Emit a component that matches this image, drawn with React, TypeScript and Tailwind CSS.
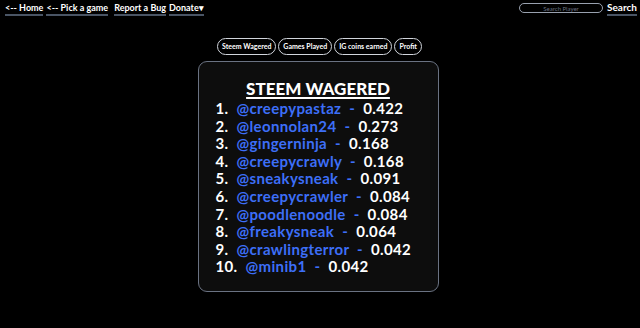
import React from "react";

const leaders = [
  { name: "creepypastaz", value: "0.422" },
  { name: "leonnolan24", value: "0.273" },
  { name: "gingerninja", value: "0.168" },
  { name: "creepycrawly", value: "0.168" },
  { name: "sneakysneak", value: "0.091" },
  { name: "creepycrawler", value: "0.084" },
  { name: "poodlenoodle", value: "0.084" },
  { name: "freakysneak", value: "0.064" },
  { name: "crawlingterror", value: "0.042" },
  { name: "minib1", value: "0.042" },
];

const tabs = ["Steem Wagered", "Games Played", "IG coins earned", "Profit"];

const App = () => {
  return (
    <div className="w-[640px] h-[328px] bg-black text-white font-['Lato','Noto_Sans',sans-serif] overflow-hidden">
      {/* nav bar */}
      <div className="flex items-start justify-between px-[5px] pt-[1px]">
        <div className="flex gap-[3px] text-[9px] font-bold leading-[13px]">
          <a className="border-b-2 border-gray-600">&lt;-- Home</a>
          <a className="border-b-2 border-gray-600">&lt;-- Pick a game</a>
          <a className="ml-[3px] border-b-2 border-gray-600">Report a Bug</a>
          <a className="border-b-2 border-gray-600">Donate▾</a>
        </div>
        <div className="flex items-start gap-[4px] mr-[-2px]">
          <input
            placeholder="Search Player"
            className="mt-[2px] w-[84px] h-[10px] rounded-full border border-gray-400 bg-black text-[6px] text-center text-white placeholder:text-gray-500 outline-none"
          />
          <a className="text-[10px] font-bold leading-[13px] border-b-2 border-gray-600">Search</a>
        </div>
      </div>

      {/* tabs */}
      <div className="flex justify-center gap-[2px] mt-[22px] ml-[-1px]">
        {tabs.map((t) => (
          <button
            key={t}
            className="h-[17px] px-[4px] rounded-full border border-gray-300 text-[7px] font-bold text-white leading-none"
          >
            {t}
          </button>
        ))}
      </div>

      {/* leaderboard card */}
      <div className="flex justify-center pr-[4px] mt-[6px]">
        <div className="w-[241px] h-[231px] bg-[#0d0d0d] border border-gray-500 rounded-[9px] pt-[17px] pl-[17px]">
          <h2 className="text-center pr-[17px] text-[17px] font-black leading-[20px]">
            <span className="underline underline-offset-[2px] decoration-[1.5px]">STEEM WAGERED</span>
          </h2>
          <ol className="mt-[1px] text-[15px] font-bold leading-[17.6px] tracking-[0.35px]">
            {leaders.map((l, i) => (
              <li key={l.name} className="whitespace-pre">
                {i + 1}.{"  "}
                <span className="text-[#3d6ff8]">@{l.name}</span>
                <span className="text-[#3d6ff8]">{"  -  "}</span>
                {l.value}
              </li>
            ))}
          </ol>
        </div>
      </div>
    </div>
  );
};

export default App;
